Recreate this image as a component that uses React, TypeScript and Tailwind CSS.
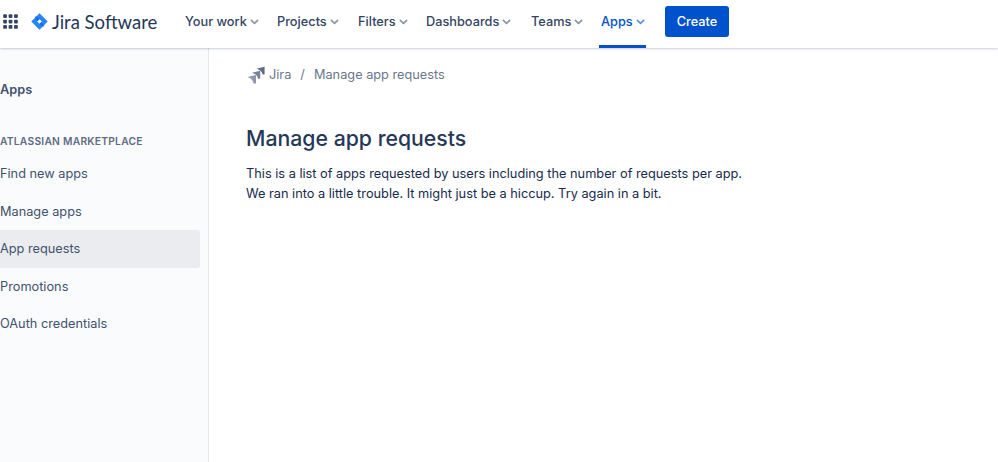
import React from "react";

const font = { fontFamily: "Inter, sans-serif" };

function Chevron({ className }: { className: string }) {
  return (
    <svg viewBox="0 0 10 6" className={`w-[9px] h-[6px] ${className}`} fill="none" stroke="currentColor" strokeWidth="1.8" strokeLinecap="round" strokeLinejoin="round">
      <path d="M1.5 1.2 5 4.6l3.5-3.4" />
    </svg>
  );
}

function NavItem({ label, active, w }: { label: string; active?: boolean; w: string }) {
  return (
    <div className={`relative h-full flex items-center gap-[3px] pt-[1px] ${w} ${active ? "text-[#0052cc]" : "text-[#344563]"}`}>
      <span className="text-[12.75px] font-medium leading-5 whitespace-nowrap">{label}</span>
      <Chevron className={active ? "text-[#5d8fdc]" : "text-[#8993a4]"} />
      {active && <div className="absolute left-[-2px] right-[-1px] bottom-0 h-[3px] bg-[#0052cc]" />}
    </div>
  );
}

function GridIcon() {
  return (
    <svg viewBox="0 0 16 16" className="w-[15px] h-[15px] text-[#344563]" fill="currentColor">
      {[0, 1, 2].flatMap((r) =>
        [0, 1, 2].map((c) => <rect key={`${r}${c}`} x={0.2 + c * 5.8} y={0.2 + r * 5.8} width="4" height="4" rx="1" />)
      )}
    </svg>
  );
}

function JiraDiamond() {
  return (
    <svg viewBox="0 0 18 18" className="w-[17px] h-[17px]">
      <path fillRule="evenodd" fill="#2684ff" d="M9 0.3 17.7 9 9 17.7 0.3 9ZM9 6.6 6.6 9 9 11.4 11.4 9Z" />
      <path fill="#0052cc" opacity="0.45" d="M9 6.6 5.2 2.8 3.8 4.2 7 8.6ZM9 11.4 12.8 15.2 14.2 13.8 11 9.4Z" />
    </svg>
  );
}

function JiraMark() {
  return (
    <svg viewBox="0 0 18 18" className="w-[18px] h-[18px]" fill="#5e6c84">
      <path d="M9.6 2.8 17.6 0.8V8.6H15.6C15.4 6 13 3.8 9.6 2.8Z" />
      <path d="M5 6.8 13.2 4.8V12.8H11C10.8 10 8.4 7.8 5 6.8Z" opacity="0.85" />
      <path d="M0.4 11 9 9V17.6H6.6C6.4 14.6 4 12.2 0.4 11Z" opacity="0.7" />
    </svg>
  );
}

function SideItem({ label, active }: { label: string; active?: boolean }) {
  return (
    <div className={`h-[37.5px] flex items-center text-[12.75px] text-[#42526e] rounded-r-[3px] ${active ? "bg-[#ebecf0]" : ""}`}>
      {label}
    </div>
  );
}

export default function App() {
  return (
    <div style={font} className="w-[998px] h-[462px] overflow-hidden bg-white flex flex-col">
      <header className="relative z-10 h-[48px] shrink-0 flex items-center bg-white shadow-[0_1px_2px_rgba(9,30,66,0.22)]">
        <div className="ml-[3px] mb-[5px]"><GridIcon /></div>
        <div className="ml-[13px] mb-[5px]"><JiraDiamond /></div>
        <span className="ml-[4px] mb-[5px] text-[18.5px] leading-6 text-[#253858] whitespace-nowrap w-[105px]" style={{ fontFamily: "Lato, sans-serif" }}>Jira Software</span>
        <nav className="ml-[28px] h-full flex items-center [&>div]:pb-[6px]">
          <NavItem label="Your work" w="w-[92px]" />
          <NavItem label="Projects" w="w-[81px]" />
          <NavItem label="Filters" w="w-[68px]" />
          <NavItem label="Dashboards" w="w-[105px]" />
          <NavItem label="Teams" w="w-[70px]" />
          <NavItem label="Apps" active w="w-[44px]" />
        </nav>
        <button className="ml-[20px] mb-[5px] w-[64px] h-[31px] rounded-[3px] bg-[#0052cc] text-white text-[12.75px] font-medium">Create</button>
      </header>
      <div className="flex-1 flex min-h-0">
        <aside className="w-[209px] shrink-0 bg-[#fafbfc] border-r border-[#e4e6ea] pr-[8px]">
          <div className="mt-[32px] text-[12.75px] font-semibold leading-5 text-[#42526e]">Apps</div>
          <div className="mt-[33px] text-[10.25px] font-semibold leading-4 tracking-[0.25px] text-[#5e6c84] whitespace-nowrap">ATLASSIAN MARKETPLACE</div>
          <div className="mt-[6px]">
            <SideItem label="Find new apps" />
            <SideItem label="Manage apps" />
            <SideItem label="App requests" active />
            <SideItem label="Promotions" />
            <SideItem label="OAuth credentials" />
          </div>
        </aside>
        <main className="flex-1 pl-[37px]">
          <div className="mt-[17px] flex items-center h-5 text-[12.75px] text-[#6b778c]">
            <div className="ml-[1px]"><JiraMark /></div>
            <span className="ml-[4px]">Jira</span>
            <span className="ml-[9px]">/</span>
            <span className="ml-[9px]">Manage app requests</span>
          </div>
          <h1 className="mt-[39px] text-[21.25px] font-medium leading-7 text-[#253858]">Manage app requests</h1>
          <p className="mt-[12px] text-[12.77px] leading-5 text-[#172b4d]">
            This is a list of apps requested by users including the number of requests per app.
            <br />
            We ran into a little trouble. It might just be a hiccup. Try again in a bit.
          </p>
        </main>
      </div>
    </div>
  );
}
